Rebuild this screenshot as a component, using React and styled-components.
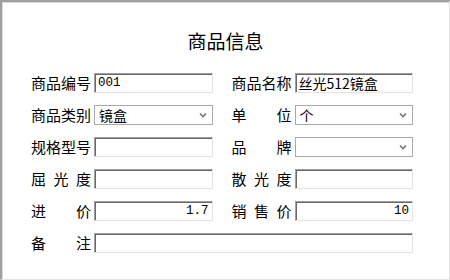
import React from "react";
import styled, { createGlobalStyle } from "styled-components";

const GlobalStyle = createGlobalStyle`
  html, body {
    margin: 0;
    padding: 0;
    background: #fff;
  }
  body {
    font-family: "Noto Sans CJK SC", "DejaVu Sans", sans-serif;
  }
`;

const Panel = styled.div`
  width: 450px;
  height: 280px;
  box-sizing: border-box;
  background: #fff;
  border-top: 2px solid #a0a0a0;
  border-left: 2px solid #a0a0a0;
  border-right: 1px solid #e3e3e3;
  border-bottom: 1px solid #e3e3e3;
  box-shadow: inset 1px 1px 0 #d8d8d8;
  padding: 27px 36px 0 29px;
  display: flex;
  flex-direction: column;
`;

const Title = styled.h2`
  margin: 0 0 20px;
  font-size: 19px;
  line-height: 24px;
  font-weight: 400;
  text-align: center;
  color: #000;
  padding-left: 7px;
`;

const Form = styled.div`
  display: flex;
  flex-direction: column;
  gap: 12px;
`;

const Row = styled.div`
  display: flex;
  gap: 19px;
`;

const Field = styled.div`
  flex: 1;
  display: flex;
  align-items: center;
  gap: 3px;
  min-width: 0;
`;

const Label = styled.div`
  width: 60px;
  flex-shrink: 0;
  display: flex;
  justify-content: space-between;
  font-size: 15px;
  line-height: 20px;
  color: #000;
`;

const TextBox = styled.div`
  flex: 1;
  height: 20px;
  box-sizing: border-box;
  border-top: 1px solid #a0a0a0;
  border-left: 1px solid #a0a0a0;
  border-right: 1px solid #e3e3e3;
  border-bottom: 1px solid #e3e3e3;
  box-shadow: inset 1px 1px 0 #696969;
  padding: 0 3px 0 3px;
  font-size: ${(p) => (p.$mono ? "12.5px" : "14px")};
  line-height: 18px;
  color: #000;
  text-align: ${(p) => (p.$right ? "right" : "left")};
  font-family: ${(p) =>
    p.$mono ? '"Liberation Mono", "Noto Sans CJK SC", monospace' : "inherit"};
  white-space: nowrap;
  overflow: hidden;
`;

const SelectBox = styled.div`
  flex: 1;
  height: 20px;
  box-sizing: border-box;
  border: 1px solid #a9a9a9;
  display: flex;
  align-items: center;
  justify-content: space-between;
  padding: 0 5px 0 4px;
  font-size: 14px;
  color: #000;
`;

const Chevron = () => (
  <svg width="8" height="6" viewBox="0 0 8 6">
    <path d="M1 1.5 L4 4.5 L7 1.5" fill="none" stroke="#777" strokeWidth="1.6" />
  </svg>
);

const LabelText = ({ text }) => (
  <Label>
    {text.split("").map((c, i) => (
      <span key={i}>{c}</span>
    ))}
  </Label>
);

const Input = ({ label, value, right, mono }) => (
  <Field>
    <LabelText text={label} />
    <TextBox $right={right} $mono={mono}>
      {value}
    </TextBox>
  </Field>
);

const Select = ({ label, value }) => (
  <Field>
    <LabelText text={label} />
    <SelectBox>
      <span>{value}</span>
      <Chevron />
    </SelectBox>
  </Field>
);

export default function App() {
  return (
    <>
      <GlobalStyle />
      <Panel>
        <Title>商品信息</Title>
        <Form>
          <Row>
            <Input label="商品编号" value="001" mono />
            <Input label="商品名称" value="丝光512镜盒" />
          </Row>
          <Row>
            <Select label="商品类别" value="镜盒" />
            <Select label="单位" value="个" />
          </Row>
          <Row>
            <Input label="规格型号" value="" />
            <Select label="品牌" value="" />
          </Row>
          <Row>
            <Input label="屈光度" value="" />
            <Input label="散光度" value="" />
          </Row>
          <Row>
            <Input label="进价" value="1.7" right mono />
            <Input label="销售价" value="10" right mono />
          </Row>
          <Row>
            <Input label="备注" value="" />
          </Row>
        </Form>
      </Panel>
    </>
  );
}
